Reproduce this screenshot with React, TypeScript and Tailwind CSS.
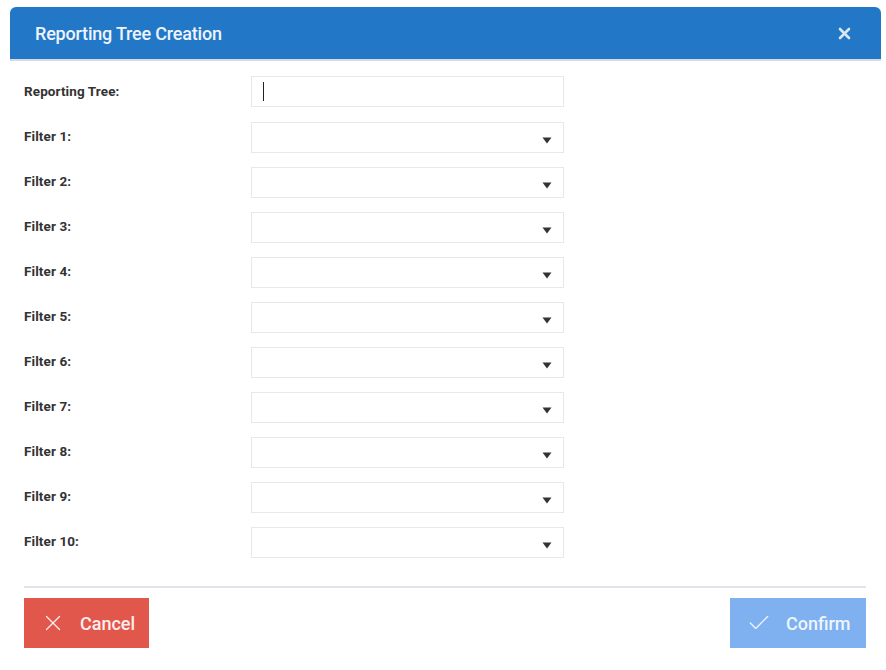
import { X, Check } from 'lucide-react'

const filters = Array.from({ length: 10 }, (_, i) => `Filter ${i + 1}:`)

function Caret() {
  return (
    <svg width="10" height="7" viewBox="0 0 10 7" className="absolute right-[11px] top-[14px]">
      <path d="M0.5 0.5 H9.5 L5 6.5 Z" fill="#333" />
    </svg>
  )
}

export default function App() {
  return (
    <div
      className="w-[886px] h-[670px] bg-white pt-[7px] pl-[10px] pr-[5px]"
      style={{ fontFamily: 'Roboto, "Liberation Sans", sans-serif' }}
    >
      <div className="h-[52px] bg-[#2277c7] rounded-t-[6px] flex items-center justify-between pl-[25px] pr-[30px]">
        <h1 className="text-[18px] font-medium text-[#eef4fb] tracking-[-0.2px]">Reporting Tree Creation</h1>
        <svg width="13" height="13" viewBox="0 0 13 13">
          <path d="M2 2 L11 11 M11 2 L2 11" stroke="#dbe7f5" strokeWidth="2.6" strokeLinecap="round" />
        </svg>
      </div>
      <div className="h-[2px] bg-[#d6dbe1]" />
      <div className="pl-[14px] pr-[15px] pt-[15px]">
        <div className="flex flex-col gap-[14px]">
          <div className="flex items-center mb-px">
            <label className="w-[227px] text-[13.5px] font-bold text-[#333] tracking-[0.1px]">Reporting Tree:</label>
            <div className="w-[313px] h-[31px] border border-[#e6e8eb] flex items-center pl-[11px]">
              <div className="w-px h-[19px] bg-[#222]" />
            </div>
          </div>
          {filters.map((f) => (
            <div key={f} className="flex items-center">
              <label className="w-[227px] text-[13.5px] font-bold text-[#333] tracking-[0.1px] -translate-y-px">{f}</label>
              <div className="w-[313px] h-[31px] border border-[#e6e8eb] relative">
                <Caret />
              </div>
            </div>
          ))}
        </div>
        <div className="mt-[28px] h-[2px] bg-[#e1e3e8]" />
        <div className="mt-[10px] flex justify-between">
          <button className="h-[50px] w-[125px] bg-[#e2574c] text-[#fbeeed] flex items-center pl-[16px] gap-[14px] text-[18px] font-medium">
            <X size={26} strokeWidth={1.2} />
            Cancel
          </button>
          <button className="h-[50px] w-[136px] bg-[#7fb1f1] text-[#eef5fe] flex items-center pl-[16px] gap-[14px] text-[18px] font-medium">
            <Check size={26} strokeWidth={1.2} />
            Confirm
          </button>
        </div>
      </div>
    </div>
  )
}
